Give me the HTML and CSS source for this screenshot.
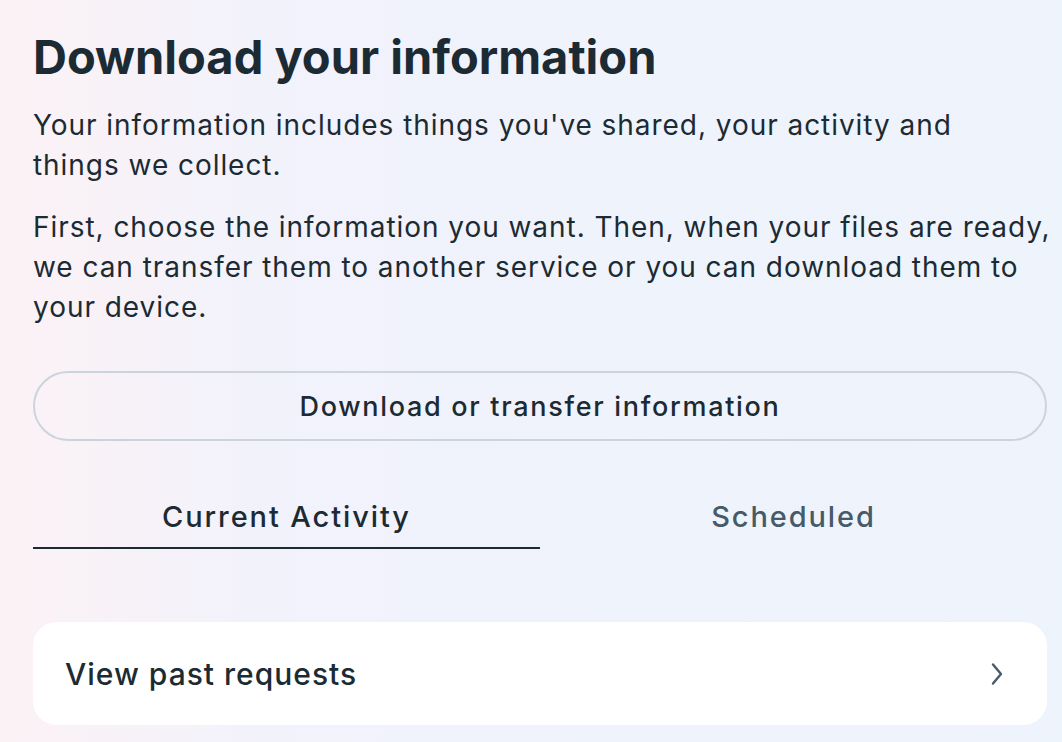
FILE: index.html
```html
<!DOCTYPE html>
<html lang="en">
<head>
<meta charset="utf-8">
<title>Download your information</title>
<link rel="stylesheet" href="styles.css">
</head>
<body>
<main class="page">
  <h1 class="title">Download your information</h1>
  <p class="text">Your information includes things you've shared, your activity and<br>things we collect.</p>
  <p class="text">First, choose the information you want. Then, when your files are ready,<br>we can transfer them to another service or you can download them to<br>your device.</p>
  <button class="pill">Download or transfer information</button>
  <div class="tabs">
    <div class="tab tab-active">Current Activity</div>
    <div class="tab">Scheduled</div>
  </div>
  <div class="card">
    <span class="card-label">View past requests</span>
    <svg class="chev" width="12" height="24" viewBox="0 0 12 24"><path d="M2 2.5 L10 12 L2 21.5" fill="none" stroke="#465a69" stroke-width="2.4" stroke-linecap="round" stroke-linejoin="round"/></svg>
  </div>
</main>
</body>
</html>
```
FILE: styles.css
```css
html, body {
  margin: 0;
  padding: 0;
}
body {
  width: 1062px;
  height: 742px;
  overflow: hidden;
  background: linear-gradient(90deg, #fcf2f6 0%, #f2f2fb 25%, #eff3fc 60%, #eef4fb 100%);
  font-family: Inter, "Noto Sans", sans-serif;
  color: #1c2b33;
}
.page {
  padding: 29px 15px 0 33px;
  display: flex;
  flex-direction: column;
}
.title {
  margin: 0;
  font-size: 47px;
  line-height: 56px;
  font-weight: 700;
  letter-spacing: 0;
}
.text {
  margin: 20px -15px 0 0;
  font-size: 28px;
  line-height: 40px;
  font-weight: 400;
  letter-spacing: 0.95px;
  white-space: nowrap;
}
.text + .text {
  margin-top: 22px;
}
.pill {
  margin-top: 44px;
  height: 70px;
  box-sizing: border-box;
  border: 2px solid #cdd3dc;
  border-radius: 35px;
  background: transparent;
  font-family: inherit;
  font-size: 27px;
  font-weight: 500;
  letter-spacing: 1.7px;
  color: #1c2b33;
}
.tabs {
  margin-top: 56px;
  display: flex;
}
.tab {
  flex: 1;
  text-align: center;
  font-size: 29px;
  font-weight: 500;
  line-height: 40px;
  letter-spacing: 1.9px;
  padding-bottom: 10px;
  color: #465a69;
  border-bottom: 2px solid transparent;
}
.tab-active {
  color: #1c2b33;
  border-bottom-color: #1c2b33;
}
.card {
  margin-top: 73px;
  height: 103px;
  box-sizing: border-box;
  background: #fff;
  border-radius: 24px;
  display: flex;
  align-items: center;
  justify-content: space-between;
  padding: 0 44px 0 32px;
}
.card-label {
  font-size: 30px;
  font-weight: 500;
  letter-spacing: 1px;
}
.chev {
  display: block;
}
```
